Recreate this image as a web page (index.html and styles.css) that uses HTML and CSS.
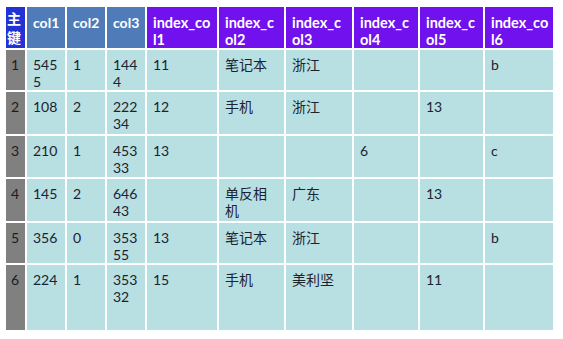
FILE: index.html
```html
<!DOCTYPE html>
<html>
<head>
<meta charset="utf-8">
<link rel="stylesheet" href="styles.css">
</head>
<body>
<table class="grid">
  <colgroup>
    <col class="w-key"><col class="w-n"><col class="w-n"><col class="w-n">
    <col class="w-i1"><col class="w-i2"><col class="w-i3"><col class="w-i4"><col class="w-i5"><col class="w-i6">
  </colgroup>
  <thead>
    <tr class="r-h">
      <th class="h-key">主<br>键</th>
      <th class="h-col">col1</th>
      <th class="h-col">col2</th>
      <th class="h-col">col3</th>
      <th class="h-idx">index_co<br>l1</th>
      <th class="h-idx">index_c<br>ol2</th>
      <th class="h-idx">index_c<br>ol3</th>
      <th class="h-idx">index_c<br>ol4</th>
      <th class="h-idx">index_c<br>ol5</th>
      <th class="h-idx">index_co<br>l6</th>
    </tr>
  </thead>
  <tbody>
    <tr class="r1"><td class="k">1</td><td>5455</td><td>1</td><td>1444</td><td>11</td><td>笔记本</td><td>浙江</td><td></td><td></td><td>b</td></tr>
    <tr class="r2"><td class="k">2</td><td>108</td><td>2</td><td>22234</td><td>12</td><td>手机</td><td>浙江</td><td></td><td>13</td><td></td></tr>
    <tr class="r3"><td class="k">3</td><td>210</td><td>1</td><td>45333</td><td>13</td><td></td><td></td><td>6</td><td></td><td>c</td></tr>
    <tr class="r4"><td class="k">4</td><td>145</td><td>2</td><td>64643</td><td></td><td>单反相机</td><td>广东</td><td></td><td>13</td><td></td></tr>
    <tr class="r5"><td class="k">5</td><td>356</td><td>0</td><td>35355</td><td>13</td><td>笔记本</td><td>浙江</td><td></td><td></td><td>b</td></tr>
    <tr class="r6"><td class="k">6</td><td>224</td><td>1</td><td>35332</td><td>15</td><td>手机</td><td>美利坚</td><td></td><td>11</td><td></td></tr>
  </tbody>
</table>
</body>
</html>
```
FILE: styles.css
```css
html, body {
  margin: 0;
  padding: 0;
  background: #ffffff;
}
body {
  padding: 5px 0 0 4px;
  font-family: Lato, "Noto Sans CJK SC", sans-serif;
}
.grid {
  table-layout: fixed;
  border-collapse: separate;
  border-spacing: 2px;
  width: 551px;
}
.w-key { width: 19px; }
.w-n { width: 38px; }
.w-i1 { width: 70px; }
.w-i2 { width: 65px; }
.w-i3 { width: 66px; }
.w-i4 { width: 64px; }
.w-i5 { width: 63px; }
.w-i6 { width: 68px; }

th, td {
  vertical-align: top;
  text-align: left;
  font-size: 14px;
  line-height: 17px;
  padding: 6px 5px 0 6px;
}
td {
  word-break: break-all;
  overflow-wrap: anywhere;
}
th {
  color: #ffffff;
  font-weight: 700;
  white-space: nowrap;
  overflow: hidden;
  padding-top: 7px;
}
.h-key {
  background: #2233d6;
  padding: 2px 0 0 1px;
  font-family: "Noto Sans CJK SC", sans-serif;
  font-size: 14px;
  line-height: 19px;
  font-weight: 700;
}
.h-col { background: #4f7cb9; }
.h-idx { background: #7011ee; font-size: 14.5px; }

td {
  background: #b8dfe2;
  color: #1c2330;
  font-family: Lato, "Noto Sans CJK SC", sans-serif;
}
td.k {
  background: #808080;
  color: #1c1c1c;
  padding-left: 5px;
  padding-right: 0;
}
.r-h { height: 41px; }
.r1 { height: 40px; }
.r2 { height: 42px; }
.r3 { height: 41px; }
.r4 { height: 42px; }
.r5 { height: 40px; }
.r6 { height: 65px; }
```
